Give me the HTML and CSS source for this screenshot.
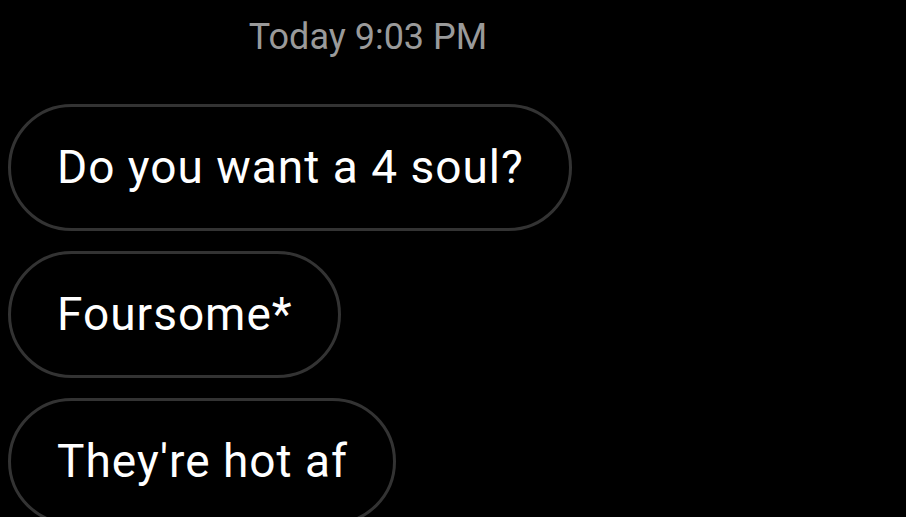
FILE: index.html
```html
<!DOCTYPE html>
<html lang="en">
<head>
    <meta charset="UTF-8">
    <meta name="viewport" content="width=device-width, initial-scale=1.0">
    <title>Messages</title>
    <link rel="stylesheet" href="styles.css">
</head>
<body>
    <div class="thread">
        <div class="stamp">Today 9:03 PM</div>

        <div class="messages">
            <div class="bubble">Do you want a 4 soul?</div>
            <div class="bubble">Foursome*</div>
            <div class="bubble">They're hot af</div>
        </div>
    </div>
</body>
</html>
```

FILE: styles.css
```css
html, body {
    margin: 0;
    padding: 0;
    background-color: #000;
    height: 100%;
    overflow: hidden;
}
body {
    font-family: Roboto, 'Noto Sans', sans-serif;
    color: #fff;
}
.thread {
    padding: 13px 8px 0;
}
.stamp {
    width: 720px;
    text-align: center;
    font-size: 36px;
    line-height: 48px;
    color: #9a9a9a;
    margin-bottom: 43px;
}
.messages {
    display: flex;
    flex-direction: column;
    align-items: flex-start;
    gap: 20px;
}
.bubble {
    border: 3px solid #333;
    border-radius: 64px;
    padding: 34px 45px 34px 46px;
    font-size: 46px;
    line-height: 53px;
    letter-spacing: 1px;
    white-space: nowrap;
}
```
